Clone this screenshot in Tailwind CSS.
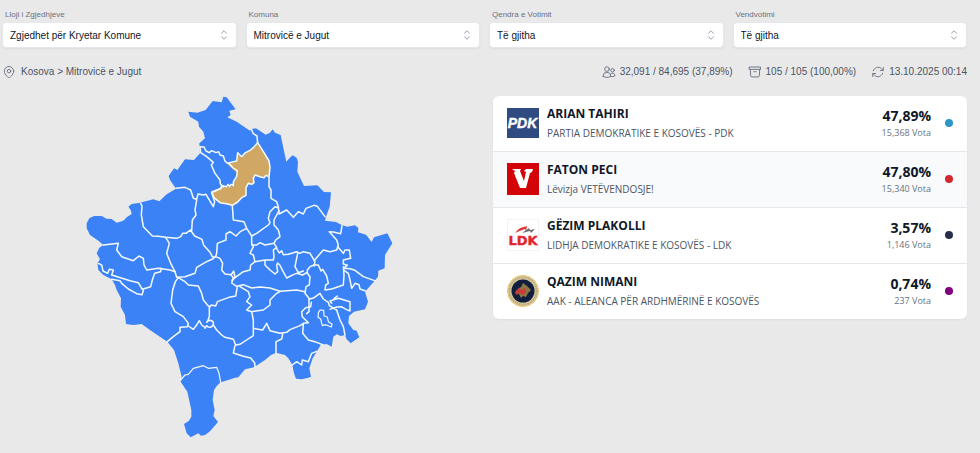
<!DOCTYPE html>
<html lang="sq">
<head>
<meta charset="utf-8">
<meta name="viewport" content="width=device-width, initial-scale=1">
<title>Rezultatet - Mitrovicë e Jugut</title>
<script src="https://cdn.jsdelivr.net/npm/@tailwindcss/browser@4"></script>
</head>
<body class="min-h-screen bg-[#e9e9e9] font-['Liberation_Sans',Arial,sans-serif]">
<svg class="hidden">
  <symbol id="chevrons" viewBox="0 0 24 24"><path d="M7 8.500l5-5 5 5M7 15.500l5 5 5-5" fill="none" stroke="currentColor" stroke-width="2" stroke-linecap="round" stroke-linejoin="round"/></symbol>
</svg>
<main class="pt-2.5 pr-[13px] pl-0.5">
  <form class="grid grid-cols-4 gap-[9px]">
    <div>
      <label for="lloji" class="block pl-[3px] text-[8px] leading-[10px] text-gray-500">Lloji i Zgjedhjeve</label>
      <div class="relative mt-0.5">
        <select id="lloji" class="block h-[26px] w-full appearance-none rounded border border-gray-200 bg-white pr-6 pl-[7px] text-[10px] text-gray-900 shadow-xs"><option>Zgjedhet për Kryetar Komune</option></select>
        <svg class="pointer-events-none absolute top-[7px] right-[7px] size-3 text-gray-400"><use href="#chevrons"/></svg>
      </div>
    </div>
    <div>
      <label for="komuna" class="block pl-[3px] text-[8px] leading-[10px] text-gray-500">Komuna</label>
      <div class="relative mt-0.5">
        <select id="komuna" class="block h-[26px] w-full appearance-none rounded border border-gray-200 bg-white pr-6 pl-[7px] text-[10px] text-gray-900 shadow-xs"><option>Mitrovicë e Jugut</option></select>
        <svg class="pointer-events-none absolute top-[7px] right-[7px] size-3 text-gray-400"><use href="#chevrons"/></svg>
      </div>
    </div>
    <div>
      <label for="qendra" class="block pl-[3px] text-[8px] leading-[10px] text-gray-500">Qendra e Votimit</label>
      <div class="relative mt-0.5">
        <select id="qendra" class="block h-[26px] w-full appearance-none rounded border border-gray-200 bg-white pr-6 pl-[7px] text-[10px] text-gray-900 shadow-xs"><option>Të gjitha</option></select>
        <svg class="pointer-events-none absolute top-[7px] right-[7px] size-3 text-gray-400"><use href="#chevrons"/></svg>
      </div>
    </div>
    <div>
      <label for="vendvotimi" class="block pl-[3px] text-[8px] leading-[10px] text-gray-500">Vendvotimi</label>
      <div class="relative mt-0.5">
        <select id="vendvotimi" class="block h-[26px] w-full appearance-none rounded border border-gray-200 bg-white pr-6 pl-[7px] text-[10px] text-gray-900 shadow-xs"><option>Të gjitha</option></select>
        <svg class="pointer-events-none absolute top-[7px] right-[7px] size-3 text-gray-400"><use href="#chevrons"/></svg>
      </div>
    </div>
  </form>

  <div class="mt-[17px] flex items-center justify-between text-[10px] leading-[14px] text-gray-600">
    <p class="flex items-center gap-[5px]">
      <svg class="size-3.5 text-gray-500" viewBox="0 0 24 24" fill="none" stroke="currentColor" stroke-width="1.6" stroke-linecap="round" stroke-linejoin="round"><path d="M15 10.500a3 3 0 1 1-6 0 3 3 0 0 1 6 0Z"/><path d="M20 10.500c0 7-8 11.500-8 11.500S4 17.500 4 10.500a8 8 0 1 1 16 0Z"/></svg>
      <span>Kosova &gt; Mitrovicë e Jugut</span>
    </p>
    <ul class="flex items-center gap-[15px]">
      <li class="flex items-center gap-1">
        <svg class="size-3.5 text-gray-500" viewBox="0 0 24 24" fill="none" stroke="currentColor" stroke-width="1.6" stroke-linecap="round" stroke-linejoin="round"><circle cx="8.500" cy="7" r="4"/><circle cx="18" cy="9" r="3"/><path d="M2 19.500v-.5a6.500 6.500 0 0 1 13 0v.5c-4 2.300-9 2.300-13 0ZM15 20c2.700.2 5-.2 7.200-1.300A4.200 4.200 0 0 0 14.500 16"/></svg>
        <span>32,091 / 84,695 (37,89%)</span>
      </li>
      <li class="flex items-center gap-1">
        <svg class="size-3.5 text-gray-500" viewBox="0 0 24 24" fill="none" stroke="currentColor" stroke-width="1.6" stroke-linecap="round" stroke-linejoin="round"><path d="M2.500 3.500h19v4h-19ZM4 7.500l.6 11a2.200 2.200 0 0 0 2.200 2h10.400a2.200 2.200 0 0 0 2.200-2l.6-11M10 11.500h4"/></svg>
        <span>105 / 105 (100,00%)</span>
      </li>
      <li class="flex items-center gap-1">
        <svg class="size-3.5 text-gray-500" viewBox="0 0 24 24" fill="none" stroke="currentColor" stroke-width="1.6" stroke-linecap="round" stroke-linejoin="round"><path d="M16 9.300h5V4.300M21 9.300l-3.200-3.200A8.300 8.300 0 0 0 4 9.900M8 14.700H3v5M3 14.700l3.200 3.200A8.300 8.300 0 0 0 20 14.100"/></svg>
        <span>13.10.2025 00:14</span>
      </li>
    </ul>
  </div>

  <div class="mt-[17px] grid grid-cols-[minmax(0,491fr)_minmax(0,474fr)] items-start">
    <div class="flex justify-center pr-4">
      <svg class="mt-[-6px] w-[340px] max-w-full" viewBox="0 0 1020 1080" role="img" aria-label="Harta e komunave të Kosovës">
        <path fill="#3b82f6" d="M355 65L382 68 407 60 428 33 455 37 460 20 470 22 497 58 478 62 482 75 472 82 500 95 540 122 545 117 558 115 587 134 600 128 608 118 615 128 632 135 635 150 649 215 658 205 668 196 680 203 684 215 682 245 702 288 742 286 762 306 783 307 779 350 768 380 765 392 798 396 815 405 832 410 855 406 865 414 864 427 888 434 905 456 912 442 952 430 967 460 945 495 944 535 925 542 924 560 914 572 885 605 894 635 885 658 852 665 837 678 835 700 850 720 860 722 868 742 842 760 830 748 825 735 812 738 800 733 790 740 785 770 770 762 752 765 742 782 728 805 718 835 723 860 715 863 695 868 678 866 672 850 667 825 655 805 645 795 618 788 603 795 585 810 552 832 525 838 505 862 480 866 500 862 475 870 452 877 440 888 432 900 428 930 434 960 430 978 444 996 420 1024 405 1035 393 1037 385 1030 362 1042 350 1030 342 1002 357 992 364 980 364 960 352 905 332 875 335 860 325 820 312 780 292 755 262 735 240 720 215 702 190 705 168 702 165 675 152 650 153 625 140 600 135 585 125 568 100 555 85 540 82 520 90 508 80 490 88 473 100 465 85 452 60 435 50 415 50 400 58 385 72 378 95 378 110 386 125 387 140 398 160 392 170 382 185 372 182 360 175 350 185 342 210 338 250 328 268 334 290 313 318 296 300 270 296 258 312 235 322 240 345 208 372 210 390 190 388 160 405 145 400 125 387 110 385 95 360 80Z"/>
        <path fill="#d0a864" d="M472 222L500 215 503 192 515 203 525 192 540 183 550 175 563 160 582 190 597 215 600 235 597 262 588 258 582 265 570 262 555 257 550 268 552 280 545 285 535 282 528 295 528 318 515 325 503 338 487 348 470 343 450 340 432 325 425 308 450 298 460 290 470 292 490 288 490 282 500 265 502 248 490 240Z"/>
        <g fill="none" stroke="#f4fafc" stroke-width="4.500" stroke-linejoin="round" stroke-linecap="round">
          <path d="M390 170l12 1 6 12 10 5 7-6 13 6 8-3 4 10 10 3 5 15 7 7 28-7 3-25 12 12 10-11 15-8 10-8 13-15 19 30 15 25 3 20-3 27-9-4-6 7-12-3-15-5-5 11 2 12-7 5-10-3-7 13v23l-13 7-12 13-16 10-17-5-20-3-18-15-7-17 25-10 10-8 10 2 4-7 5 7 4-7 7 4v-11l10-17 2-17-12-8-15-15"/>
          <path d="M545 119l5 12 11 7 2 22M390 172l2 16 18 12 20 17-6 8 11 25 15 20 1 12 9 8M455 285l-2 11-28 12"/>
          <path d="M318 295l27-3 17 8 8 25 10 3 4-16 16 3 8-2 7 12 15 25 4-15-9-27M380 330l-5 30 3 15-11 15-2 32"/>
          <path d="M212 340l4 8-2 27 6 35 27 28 17 1 23 3 33 3 12-5 6-10h10l13-10 13 18 22 10 5 18 18 19 8 15 7 2"/>
          <path d="M287 442l11 18-8 30 12 30 13 25 5 17 25-2 30-10 5-18 30-17 18-8 9-8"/>
          <path d="M100 465l45-5-5 20 15 20 35 12 17-14 13 7 2 20 8 15 35-5 35 5 15 5M85 520l10 5 4 18 14 7 5-12 12 2-5 15 55 17 25 6 12 20 25-8 5-20 7-20 18-5 1-10M125 568l25 4 5 8 20 17 25 14 16 3 4-12-6-8"/>
          <path d="M325 563l-9 12-8 25-5 40 12 25 25 15 15 20-3 10-22 2v13l-20 15-18 15M325 563l20 12 10 10 30 3 10 22 5 20 15 18 5 2 4-5 13 3 5-13 35-13 20-4 5-28"/>
          <path d="M418 650v30l-5 12m-58 16l15 10 10-13 8-13 7 13 10 7M410 697c5-10 22-6 20 5s-15 13-20 5l-5 8M431 706l9 14 15 15 10 7 25 6 7 17 13-2 15-10 25-16M495 767l-5 22 30 10 22 5 12 15 1 13"/>
          <path d="M487 348l3 42 32 5 8 20 15 23M530 415l-18 9-14 14-18-13-12 7v18l-26 10-2 30-3 10 13 5 8 15-3 20 10 12 18 2 7 10-5 15 15 10 20-5 25 10 25-3 30 3 30 10 50-4 25 5"/>
          <path d="M483 555l8-12 4 18-9 10 9-8 25-18 20-5 2-15 13-10-5-20-10-5 10-20-5-10v-22M545 465h15l10-7 15 7 27-5 5-10 13-10-5-20-13-15v-15l8-15 7-13M545 438l15-8 35-25 5-7-5-13 5-20 15-15 9 3"/>
          <path d="M597 262v28l6 10v25l17 10 5 15 2 22 23-12 20 22 15-17 15 7 8-17 24-9 10 3 23 31"/>
          <path d="M612 460l8 12-10 8 2 20-2 10h-25l-30 5M585 510v15l15 15 15 12 8-7-3-20 3-6 7 7 8 16 12 22 20-10 10-4 18 5 12-7M620 475l8 14 7-7 5 12 15-1 25-8 10 5 10-5 20 5 15 25-3 13M683 490l-8 40 10 18 15-5M732 512l28-32 20 5 20-5 5-15-5-15-22-25 12 1 22 5 4-24"/>
          <path d="M803 470l17 20 5-10h13l4 25-22 5v12l12 4-12 9 20 1 15 5 25 19 34 12M820 530l2 25-2 30-35 12-20 3 2-15 8-5-5-22-12-20-5 5-8-18h-13l-12 5-8 10v10l8 10-2 25-10 5-3 20 12 15v40l-7 6M823 542l12 8 5 20 5 25 10-15 12 4 3 13 15 5"/>
          <path d="M510 590l25 15 5 15-10 15 15 10-15 15 15 5 35-5 20-15v-15l20-20 10-5M545 665l5 25v45M550 715l28 5 12-20 10 22 30 8 20-3 10-8 30-12 10-7 15-2-18-18-2-15 12-12 15-3 2-13M638 732l-3 15-17 8v33M700 702l-2 28 17 20 25 7 20 8"/>
          <path d="M717 628l15-5 18-13 10 17 15 10 3 10 22 13 10 30 10 20 5 25M785 640l-5-7 25-8 35 10v28l-12-5-14-8-14 1-20 7M792 626l10-8M667 825l13-10 15 10 2-15 18 5 10-25 15-6"/>
          <path d="M332 870l13-15 10-2 15-18 30-8 15 8 25-3 7 18 5 27M745 668l5-8 11 1 1 17 10 3 3 14 11 7-2 9-17-7-10 3-5-20-8-5Z" stroke-width="3.500"/>
        </g>
      </svg>
    </div>

    <ol class="divide-y divide-gray-200 overflow-hidden rounded-md bg-white font-['Open_Sans','Noto_Sans',sans-serif] shadow-xs">
      <li class="flex items-center px-3.5 pt-[9px] pb-2.5">
        <svg class="size-8 shrink-0" viewBox="0 0 32 32" role="img" aria-label="PDK"><path fill="#304b82" d="M0 1h32v30H0z"/><text x="15.500" y="21" text-anchor="middle" font-family="Liberation Sans" font-size="14" font-weight="700" font-style="italic" fill="#fff" stroke="#fff" stroke-width=".4">PDK</text></svg>
        <div class="ml-2 min-w-0 flex-1"><h2 class="text-[12px] leading-[18px] font-bold text-gray-900">ARIAN TAHIRI</h2><p class="mt-[3px] text-[10px] leading-[15px] text-gray-600">PARTIA DEMOKRATIKE E KOSOVËS - PDK</p></div>
        <div class="text-right"><p class="text-[14px] leading-[18px] font-bold text-gray-900">47,89%</p><p class="text-[9px] leading-[15px] text-gray-500">15,368 Vota</p></div>
        <span class="ml-3.5 size-2 rounded-full bg-[#2e96c8]"></span>
      </li>
      <li class="flex items-center bg-[#f8fafc] px-3.5 pt-[9px] pb-2.5">
        <svg class="size-8 shrink-0" viewBox="0 0 32 32" role="img" aria-label="Lëvizja Vetëvendosje"><path fill="#d20407" d="M0 0h32v32H0z"/><path fill="#fff" d="M5 6h9l-1 2 4 10 2-9-2-1 2-2h7l-1 3-2 1-4 15h-6L7 10 8 8Z"/></svg>
        <div class="ml-2 min-w-0 flex-1"><h2 class="text-[12px] leading-[18px] font-bold text-gray-900">FATON PECI</h2><p class="mt-[3px] text-[10px] leading-[15px] text-gray-600">Lëvizja VETËVENDOSJE!</p></div>
        <div class="text-right"><p class="text-[14px] leading-[18px] font-bold text-gray-900">47,80%</p><p class="text-[9px] leading-[15px] text-gray-500">15,340 Vota</p></div>
        <span class="ml-3.5 size-2 rounded-full bg-[#d32830]"></span>
      </li>
      <li class="flex items-center px-3.5 pt-[9px] pb-2.5">
        <svg class="size-8 shrink-0" viewBox="0 0 32 32" role="img" aria-label="LDK"><path fill="#fff" stroke="#f3f3f3" d="M.5.5h31v31H.5z"/><path fill="#e5322e" d="M8 14c3-4 6-6 9-6l3-1-1 5-1-2c-4 1-7 3-10 4Z"/><path fill="#6b6f75" d="M15 14l7-5 1 2 5-1-4 4-1-2Z"/><text x="16" y="26" text-anchor="middle" font-family="DejaVu Sans" font-size="13" font-weight="700" fill="#e0262c" stroke="#e0262c" stroke-width=".4">LDK</text></svg>
        <div class="ml-2 min-w-0 flex-1"><h2 class="text-[12px] leading-[18px] font-bold text-gray-900">GËZIM PLAKOLLI</h2><p class="mt-[3px] text-[10px] leading-[15px] text-gray-600">LIDHJA DEMOKRATIKE E KOSOVËS - LDK</p></div>
        <div class="text-right"><p class="text-[14px] leading-[18px] font-bold text-gray-900">3,57%</p><p class="text-[9px] leading-[15px] text-gray-500">1,146 Vota</p></div>
        <span class="ml-3.5 size-2 rounded-full bg-[#26304a]"></span>
      </li>
      <li class="flex items-center px-3.5 pt-[9px] pb-2.5">
        <svg class="size-8 shrink-0" viewBox="0 0 32 32" role="img" aria-label="AAK"><circle cx="16" cy="16" r="15.500" fill="#d6c49a" stroke="#e8c766"/><circle cx="16" cy="16" r="13.500" fill="none" stroke="#aaa083" stroke-width="1.500" stroke-dasharray="1 1.200"/><circle cx="16" cy="16" r="11.500" fill="#111f3d"/><path fill="#8d7544" d="M16 8l4 3 4 4-3 3-2 4-3-1-2 2-2-4-3-3 3-3 2-1Z"/><path fill="#c93c35" d="M8 17l4-4 3 2 3-2 1 4-3 3-3-2-4 2Z"/></svg>
        <div class="ml-2 min-w-0 flex-1"><h2 class="text-[12px] leading-[18px] font-bold text-gray-900">QAZIM NIMANI</h2><p class="mt-[3px] text-[10px] leading-[15px] text-gray-600">AAK - ALEANCA PËR ARDHMËRINË E KOSOVËS</p></div>
        <div class="text-right"><p class="text-[14px] leading-[18px] font-bold text-gray-900">0,74%</p><p class="text-[9px] leading-[15px] text-gray-500">237 Vota</p></div>
        <span class="ml-3.5 size-2 rounded-full bg-[#800080]"></span>
      </li>
    </ol>
  </div>
</main>
</body>
</html>
